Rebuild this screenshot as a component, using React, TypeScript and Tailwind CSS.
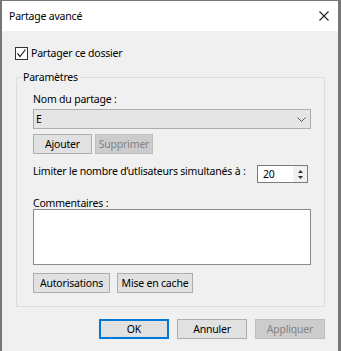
import React from "react";

const FONT = { fontFamily: '"Noto Sans", "Segoe UI", sans-serif' };

function Button({
  label,
  width,
  disabled,
  primary,
}: {
  label: string;
  width: string;
  disabled?: boolean;
  primary?: boolean;
}) {
  const base = "h-[20px] flex items-center justify-center leading-4";
  const look = disabled
    ? "bg-[#cccccc] border border-[#bfbfbf] text-[#838383]"
    : primary
      ? "bg-[#e1e1e1] border-2 border-[#0078d7] text-black"
      : "bg-[#e1e1e1] border border-[#adadad] text-black";
  return (
    <button type="button" className={`${base} ${look} ${width}`}>
      {label}
    </button>
  );
}

export default function App() {
  return (
    <div
      style={FONT}
      className="flex h-[351px] w-[341px] flex-col border-t border-l-2 border-r-[3px] border-[#767676] bg-[#f0f0f0] text-[10.5px] tracking-[-0.2px] text-black"
    >
      {/* title bar */}
      <div className="flex h-[30px] items-center justify-between bg-white pl-[7px] pr-[7px]">
        <span className="leading-4">Partage avancé</span>
        <svg width="10" height="10" viewBox="0 0 10 10" className="mr-[2px]">
          <path d="M0.5 0.5 L9.5 9.5 M9.5 0.5 L0.5 9.5" stroke="#222" strokeWidth="1.1" />
        </svg>
      </div>

      <div className="flex flex-col pl-[14px] pt-[14px]">
        <label className="-ml-px flex h-4 items-center gap-[3px] leading-4">
          <span className="flex h-[13px] w-[13px] items-center justify-center border border-[#333] bg-white">
            <svg width="11" height="11" viewBox="0 0 11 11">
              <path d="M1.5 5.5 L4 8.5 L9.5 1.5" fill="none" stroke="#222" strokeWidth="1.2" />
            </svg>
          </span>
          Partager ce dossier
        </label>

        <fieldset className="mt-[8px] w-[309px] border border-[#dcdcdc] pb-[13px] pl-[6px] pr-0">
          <legend className="pr-[2px] leading-4">Paramètres</legend>
          <div className="flex flex-col pl-[10px] pt-[6px]">
            <span className="leading-4">Nom du partage :</span>
            <div className="mt-[2px] flex h-[20px] w-[278px] items-center justify-between border border-[#adadad] bg-[#e5e5e5] pl-[2px] pr-[4px]">
              <span className="leading-4">E</span>
              <svg width="9" height="5" viewBox="0 0 9 5">
                <path d="M0.5 0.5 L4.5 4.5 L8.5 0.5" fill="none" stroke="#555" strokeWidth="1" />
              </svg>
            </div>
            <div className="mt-[5px] flex gap-[3px]">
              <Button label="Ajouter" width="w-[59px]" />
              <Button label="Supprimer" width="w-[58px]" disabled />
            </div>

            <div className="mt-[9px] flex w-[278px] items-start">
              <span className="leading-4">Limiter le nombre d’utlisateurs simultanés à :</span>
              <div className="ml-auto mr-[3px] mt-[2px] flex h-[18px] w-[51px] border border-[#7a7a7a] bg-white">
                <span className="flex-1 pl-[5px] leading-4">20</span>
                <div className="flex w-[14px] flex-col items-center justify-center gap-[3px] bg-[#f0f0f0]">
                  <svg width="5" height="3" viewBox="0 0 5 3">
                    <path d="M0 3 L2.5 0 L5 3 Z" fill="#333" />
                  </svg>
                  <svg width="5" height="3" viewBox="0 0 5 3">
                    <path d="M0 0 L2.5 3 L5 0 Z" fill="#333" />
                  </svg>
                </div>
              </div>
            </div>

            <span className="mt-[14px] leading-3">Commentaires :</span>
            <textarea className="h-[56px] w-[278px] resize-none border border-[#8a8a8a] bg-white" />

            <div className="mt-[8px] flex gap-[7px]">
              <Button label="Autorisations" width="w-[77px]" />
              <Button label="Mise en cache" width="w-[76px]" />
            </div>
          </div>
        </fieldset>

        <div className="mt-[12px] flex w-[309px] justify-end gap-[8px]">
          <Button label="OK" width="w-[70px]" primary />
          <Button label="Annuler" width="w-[70px]" />
          <Button label="Appliquer" width="w-[70px]" disabled />
        </div>
      </div>
    </div>
  );
}
